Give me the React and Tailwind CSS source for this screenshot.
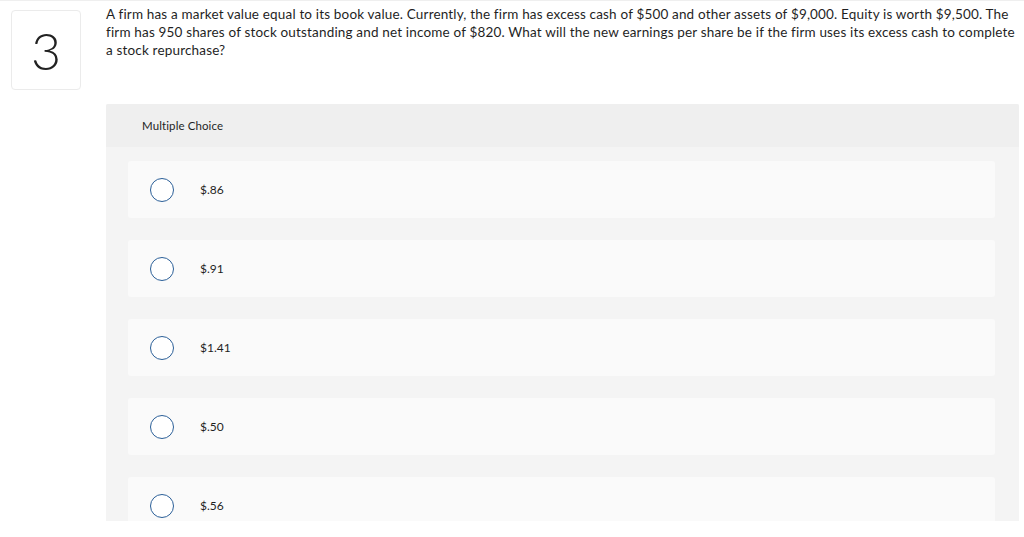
export default function App() {
  const options = ["$.86", "$.91", "$1.41", "$.50", "$.56"];
  return (
    <div
      className="w-[1024px] h-[537px] bg-white border-t border-[#efefef] overflow-hidden text-[#1f1f1f] [font-variant-ligatures:none]"
      style={{ fontFamily: "Lato, 'Open Sans', Arial, sans-serif" }}
    >
      <div className="flex">
        <div className="ml-[11px] mt-[9px] w-[70px] h-[80px] shrink-0 border border-[#ebebeb] rounded-[4px] flex items-center justify-center text-[52px] font-light leading-none text-[#222]">
          3
        </div>
        <div className="ml-[25px] w-[913px]">
          <div className="pt-[4px] text-[13.5px] tracking-[0.17px] leading-[18px] whitespace-nowrap">
            A firm has a market value equal to its book value. Currently, the firm has excess cash of $500 and other assets of $9,000. Equity is worth $9,500. The
            <br />
            firm has 950 shares of stock outstanding and net income of $820. What will the new earnings per share be if the firm uses its excess cash to complete
            <br />
            a stock repurchase?
          </div>
          <div className="mt-[45px] h-[417px] overflow-hidden rounded-t-[2px] bg-[#f4f4f4]">
            <div className="h-[43px] bg-[#efefef] pl-[36px] flex items-center text-[11.5px] tracking-[0.1px]">
              Multiple Choice
            </div>
            <div className="pt-[14px] pl-[22px] pr-[24px] flex flex-col gap-[22px]">
              {options.map((o) => (
                <div
                  key={o}
                  className="h-[57px] shrink-0 bg-[#fafafa] rounded-[3px] flex items-center pl-[22px]"
                >
                  <div className="w-[24px] h-[24px] rounded-full border-[1.5px] border-[#2b5f98] bg-white shrink-0" />
                  <div className="ml-[26px] text-[12px]">{o}</div>
                </div>
              ))}
            </div>
          </div>
        </div>
      </div>
    </div>
  );
}
